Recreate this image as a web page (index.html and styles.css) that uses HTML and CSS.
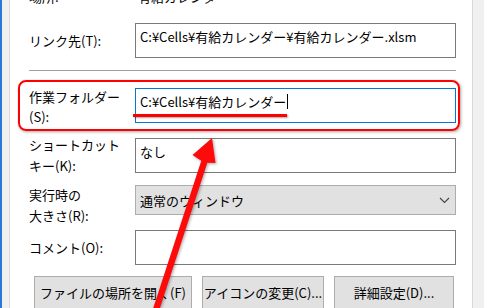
FILE: index.html
```html
<!DOCTYPE html>
<html lang="ja">
<head>
<meta charset="utf-8">
<link rel="stylesheet" href="styles.css">
</head>
<body>
<div class="window">
  <div class="panel">
    <div class="row row-top"><span class="label">場所:</span><span class="value">有給カレンダー</span></div>
    <div class="row row-link"><label class="label">リンク先(T):</label><div class="field">C:¥Cells¥有給カレンダー¥有給カレンダー.xlsm</div></div>
    <hr class="sep">
    <div class="row row-work"><label class="label">作業フォルダー<br>(S):</label><div class="field focus">C:¥Cells¥有給カレンダー<span class="caret"></span></div></div>
    <div class="row row-key"><label class="label">ショートカット<br>キー(K):</label><div class="field">なし</div></div>
    <div class="row row-run"><label class="label">実行時の<br>大きさ(R):</label><div class="select"><span>通常のウィンドウ</span><svg class="chev" width="11" height="7" viewBox="0 0 11 7"><path d="M1 1 L5.5 5.5 L10 1" fill="none" stroke="#444" stroke-width="1.1"/></svg></div></div>
    <div class="row row-comment"><label class="label">コメント(O):</label><div class="field"></div></div>
    <div class="buttons">
      <div class="btn b1">ファイルの場所を開く(F)</div>
      <div class="btn b2">アイコンの変更(C)...</div>
      <div class="btn b3">詳細設定(D)...</div>
    </div>
    <div class="highlight"></div>
    <div class="underline"></div>
  </div>
</div>
<svg class="arrow" width="484" height="308" viewBox="0 0 484 308">
  <polygon points="146.4,329 201.3,160.8 192.5,155 212,138 215.5,163 207.3,162.8 152.4,331" fill="#ff0a0a"/>
</svg>
</body>
</html>
```

FILE: styles.css
```css
html, body {
  margin: 0;
  padding: 0;
}
body {
  background: #f0f0f0;
  font-family: "Noto Sans CJK JP", "Noto Sans", sans-serif;
  font-size: 13px;
  color: #000;
  height: 308px;
  overflow: hidden;
}
.window {
  display: flex;
  height: 308px;
  box-sizing: border-box;
  border-left: 2px solid #2a7ad5;
  padding-left: 7px;
  padding-right: 11px;
}
.panel {
  position: relative;
  flex: 1;
  background: #fff;
  border-left: 1px solid #d9d9d9;
  border-right: 1px solid #d9d9d9;
  padding: 0 16px 0 19px;
}
.row {
  display: grid;
  grid-template-columns: 106px 1fr;
  grid-template-rows: 35px;
  align-items: start;
}
.label {
  line-height: 20px;
  white-space: nowrap;
}
.field {
  height: 35px;
  box-sizing: border-box;
  border: 1px solid #7a7a7a;
  padding: 3px 0 0 4px;
  line-height: 20px;
  white-space: nowrap;
  overflow: hidden;
}
.field.focus {
  border-color: #0078d7;
}
.caret {
  display: inline-block;
  width: 1px;
  height: 15px;
  background: #000;
  margin-left: 1px;
  vertical-align: -2px;
}
.row-top {
  margin-top: -13px;
  grid-template-rows: 20px;
}
.row-top .value {
  padding-left: 3px;
  line-height: 20px;
}
.row-link {
  margin-top: 16px;
}
.row-link .label,
.row-comment .label {
  align-self: center;
}
.sep {
  margin: 12px 0 0;
  border: 0;
  border-top: 1px solid #a0a0a0;
  height: 0;
}
.row-work {
  margin-top: 17px;
}
.row-work .label {
  margin-top: -1px;
}
.row-key {
  margin-top: 15px;
}
.row-key .label {
  margin-top: -4px;
  line-height: 21px;
}
.row-run {
  margin-top: 12px;
  grid-template-rows: 30px;
}
.row-run .label {
  margin-top: -1px;
  line-height: 21px;
}
.select {
  height: 30px;
  box-sizing: border-box;
  border: 1px solid #adadad;
  background: #e1e1e1;
  display: flex;
  align-items: center;
  justify-content: space-between;
  padding: 0 5px 0 4px;
  white-space: nowrap;
}
.chev {
  display: block;
  margin-top: 1px;
}
.row-comment {
  margin-top: 15px;
}
.buttons {
  display: flex;
  gap: 10px;
  margin-top: 11px;
  padding-left: 5px;
}
.btn {
  height: 33px;
  box-sizing: border-box;
  border: 1px solid #adadad;
  background: #e1e1e1;
  display: flex;
  align-items: center;
  justify-content: center;
  white-space: nowrap;
}
.b1 { width: 158px; }
.b2 { width: 122px; }
.b3 { width: 120px; }
.highlight {
  position: absolute;
  left: 8px;
  top: 80px;
  width: 442px;
  height: 51px;
  box-sizing: border-box;
  border: 2.5px solid #ff0000;
  border-radius: 8px;
  box-shadow: 1px 1px 3px rgba(0, 0, 0, 0.35);
}
.underline {
  position: absolute;
  left: 123px;
  top: 114px;
  width: 154px;
  height: 3px;
  background: #ff0000;
  box-shadow: 1px 1px 2px rgba(0, 0, 0, 0.35);
}
.arrow {
  position: absolute;
  left: 0;
  top: 0;
  pointer-events: none;
  filter: drop-shadow(1px 1px 1.5px rgba(0, 0, 0, 0.35));
}
```
